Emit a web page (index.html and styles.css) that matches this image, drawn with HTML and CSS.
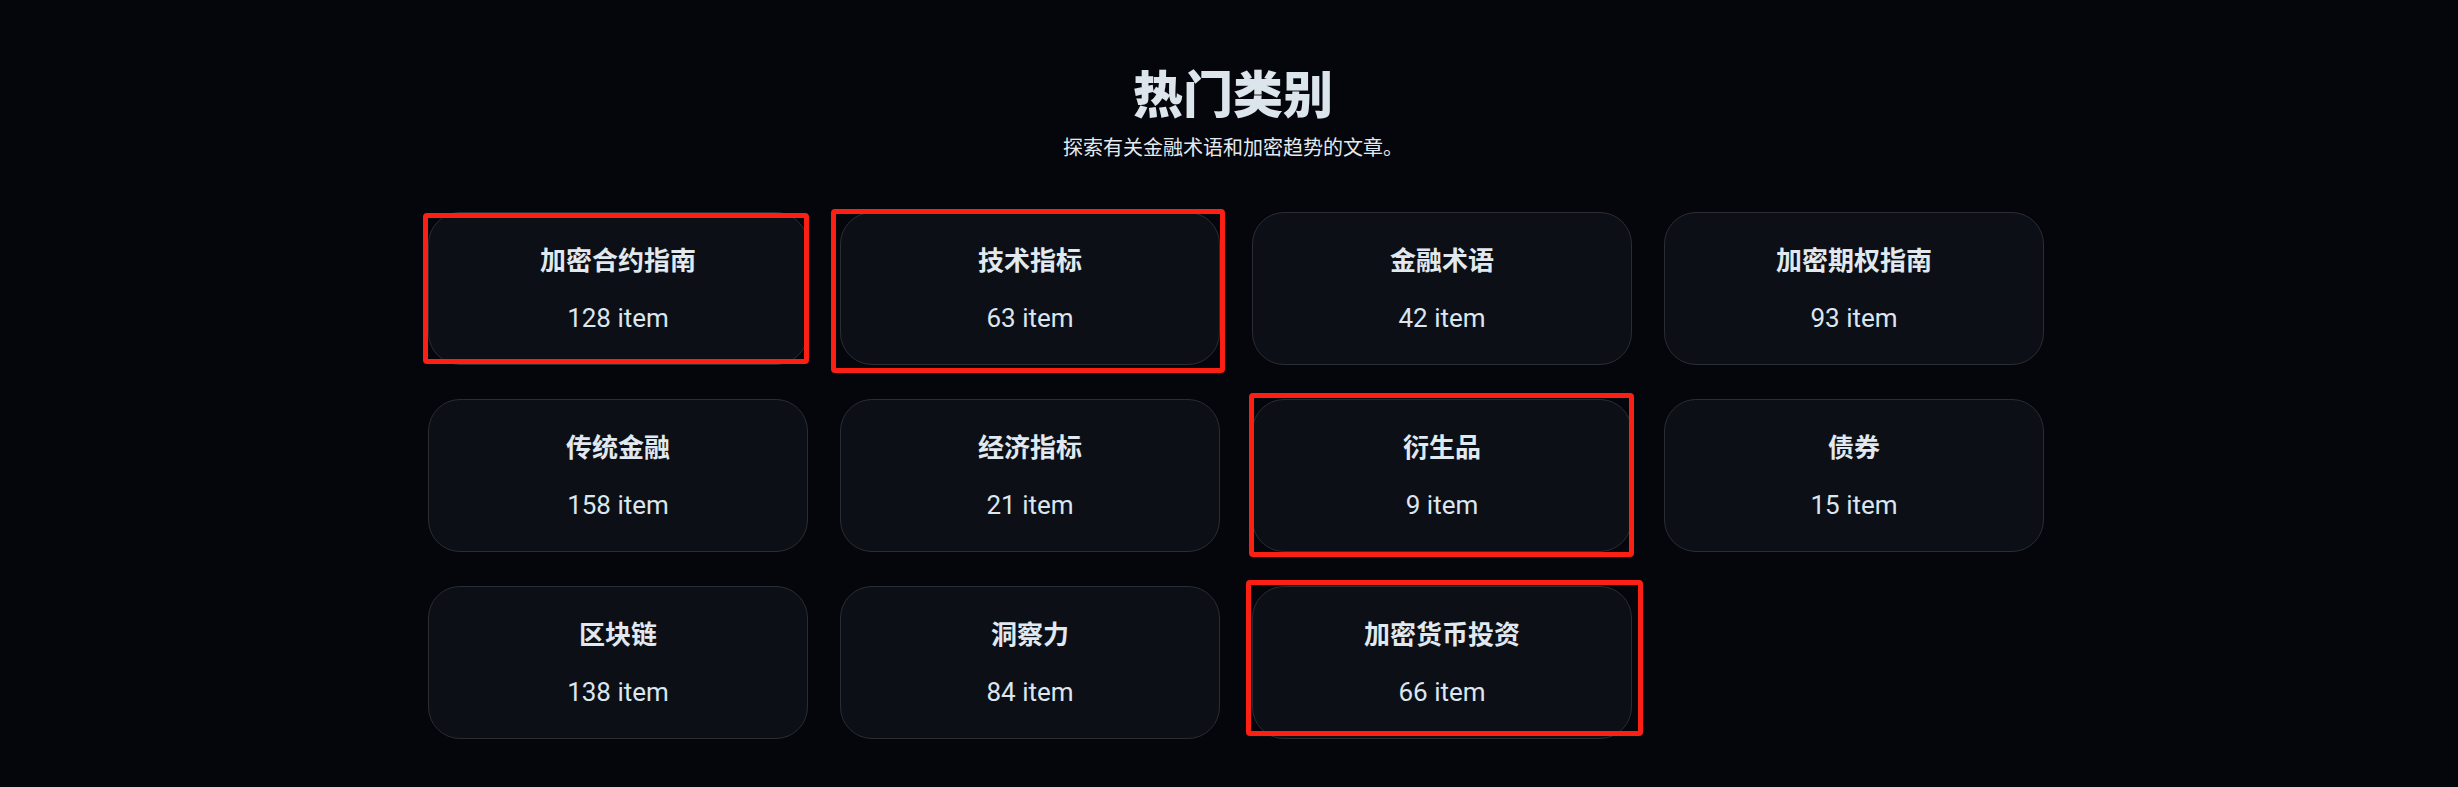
FILE: index.html
```html
<!DOCTYPE html>
<html lang="zh-CN">
<head>
<meta charset="utf-8">
<title>热门类别</title>
<link rel="stylesheet" href="styles.css">
</head>
<body>
<main class="section">
  <header class="section-head">
    <h2 class="section-title">热门类别</h2>
    <p class="section-sub">探索有关金融术语和加密趋势的文章。</p>
  </header>
  <div class="grid">
    <a class="card" href="#"><span class="card-title">加密合约指南</span><span class="card-count">128 item</span></a>
    <a class="card" href="#"><span class="card-title">技术指标</span><span class="card-count">63 item</span></a>
    <a class="card" href="#"><span class="card-title">金融术语</span><span class="card-count">42 item</span></a>
    <a class="card" href="#"><span class="card-title">加密期权指南</span><span class="card-count">93 item</span></a>
    <a class="card" href="#"><span class="card-title">传统金融</span><span class="card-count">158 item</span></a>
    <a class="card" href="#"><span class="card-title">经济指标</span><span class="card-count">21 item</span></a>
    <a class="card" href="#"><span class="card-title">衍生品</span><span class="card-count">9 item</span></a>
    <a class="card" href="#"><span class="card-title">债券</span><span class="card-count">15 item</span></a>
    <a class="card" href="#"><span class="card-title">区块链</span><span class="card-count">138 item</span></a>
    <a class="card" href="#"><span class="card-title">洞察力</span><span class="card-count">84 item</span></a>
    <a class="card" href="#"><span class="card-title">加密货币投资</span><span class="card-count">66 item</span></a>
  </div>
</main>
<div class="mark mark-1"></div>
<div class="mark mark-2"></div>
<div class="mark mark-3"></div>
<div class="mark mark-4"></div>
</body>
</html>
```

FILE: styles.css
```css
* { box-sizing: border-box; }

html, body {
  margin: 0;
  padding: 0;
  background: #04060b;
}

body {
  position: relative;
  min-height: 787px;
  color: #dfe7ee;
  font-family: Roboto, "Noto Sans CJK SC", sans-serif;
}

.section {
  padding-top: 61px;
}

.section-head {
  display: flex;
  flex-direction: column;
  align-items: center;
  padding-left: 8px;
}

.section-title {
  margin: 0;
  font-family: "Noto Sans CJK SC", sans-serif;
  font-size: 50px;
  font-weight: 900;
  line-height: 60px;
  color: #dce5ec;
}

.section-sub {
  margin: 12px 0 0;
  font-family: "Noto Sans CJK SC", sans-serif;
  font-size: 20px;
  line-height: 28px;
  color: #e3ebf2;
}

.grid {
  width: 1616px;
  margin: 51px 0 0 calc(50% - 801px);
  display: grid;
  grid-template-columns: repeat(4, 1fr);
  column-gap: 32px;
  row-gap: 34px;
}

.card {
  height: 153px;
  display: flex;
  flex-direction: column;
  align-items: center;
  justify-content: center;
  gap: 23px;
  background: #0c0f16;
  border: 1px solid #2a2d34;
  border-radius: 32px;
  text-decoration: none;
  color: #dfe7ee;
}

.card-title {
  font-family: "Noto Sans CJK SC", sans-serif;
  font-size: 26px;
  font-weight: 700;
  line-height: 36px;
  color: #e1e9f0;
}

.card-count {
  font-family: Roboto, "Noto Sans CJK SC", sans-serif;
  font-size: 26px;
  font-weight: 400;
  line-height: 36px;
  color: #dbe6ef;
}

.mark {
  position: absolute;
  border: 5px solid #fb2013;
  border-radius: 4px;
  pointer-events: none;
}

.mark-1 { left: 423px; top: 213px; width: 386px; height: 151px; }
.mark-2 { left: 831px; top: 209px; width: 394px; height: 164px; }
.mark-3 { left: 1249px; top: 393px; width: 385px; height: 164px; }
.mark-4 { left: 1246px; top: 580px; width: 397px; height: 156px; }
```
